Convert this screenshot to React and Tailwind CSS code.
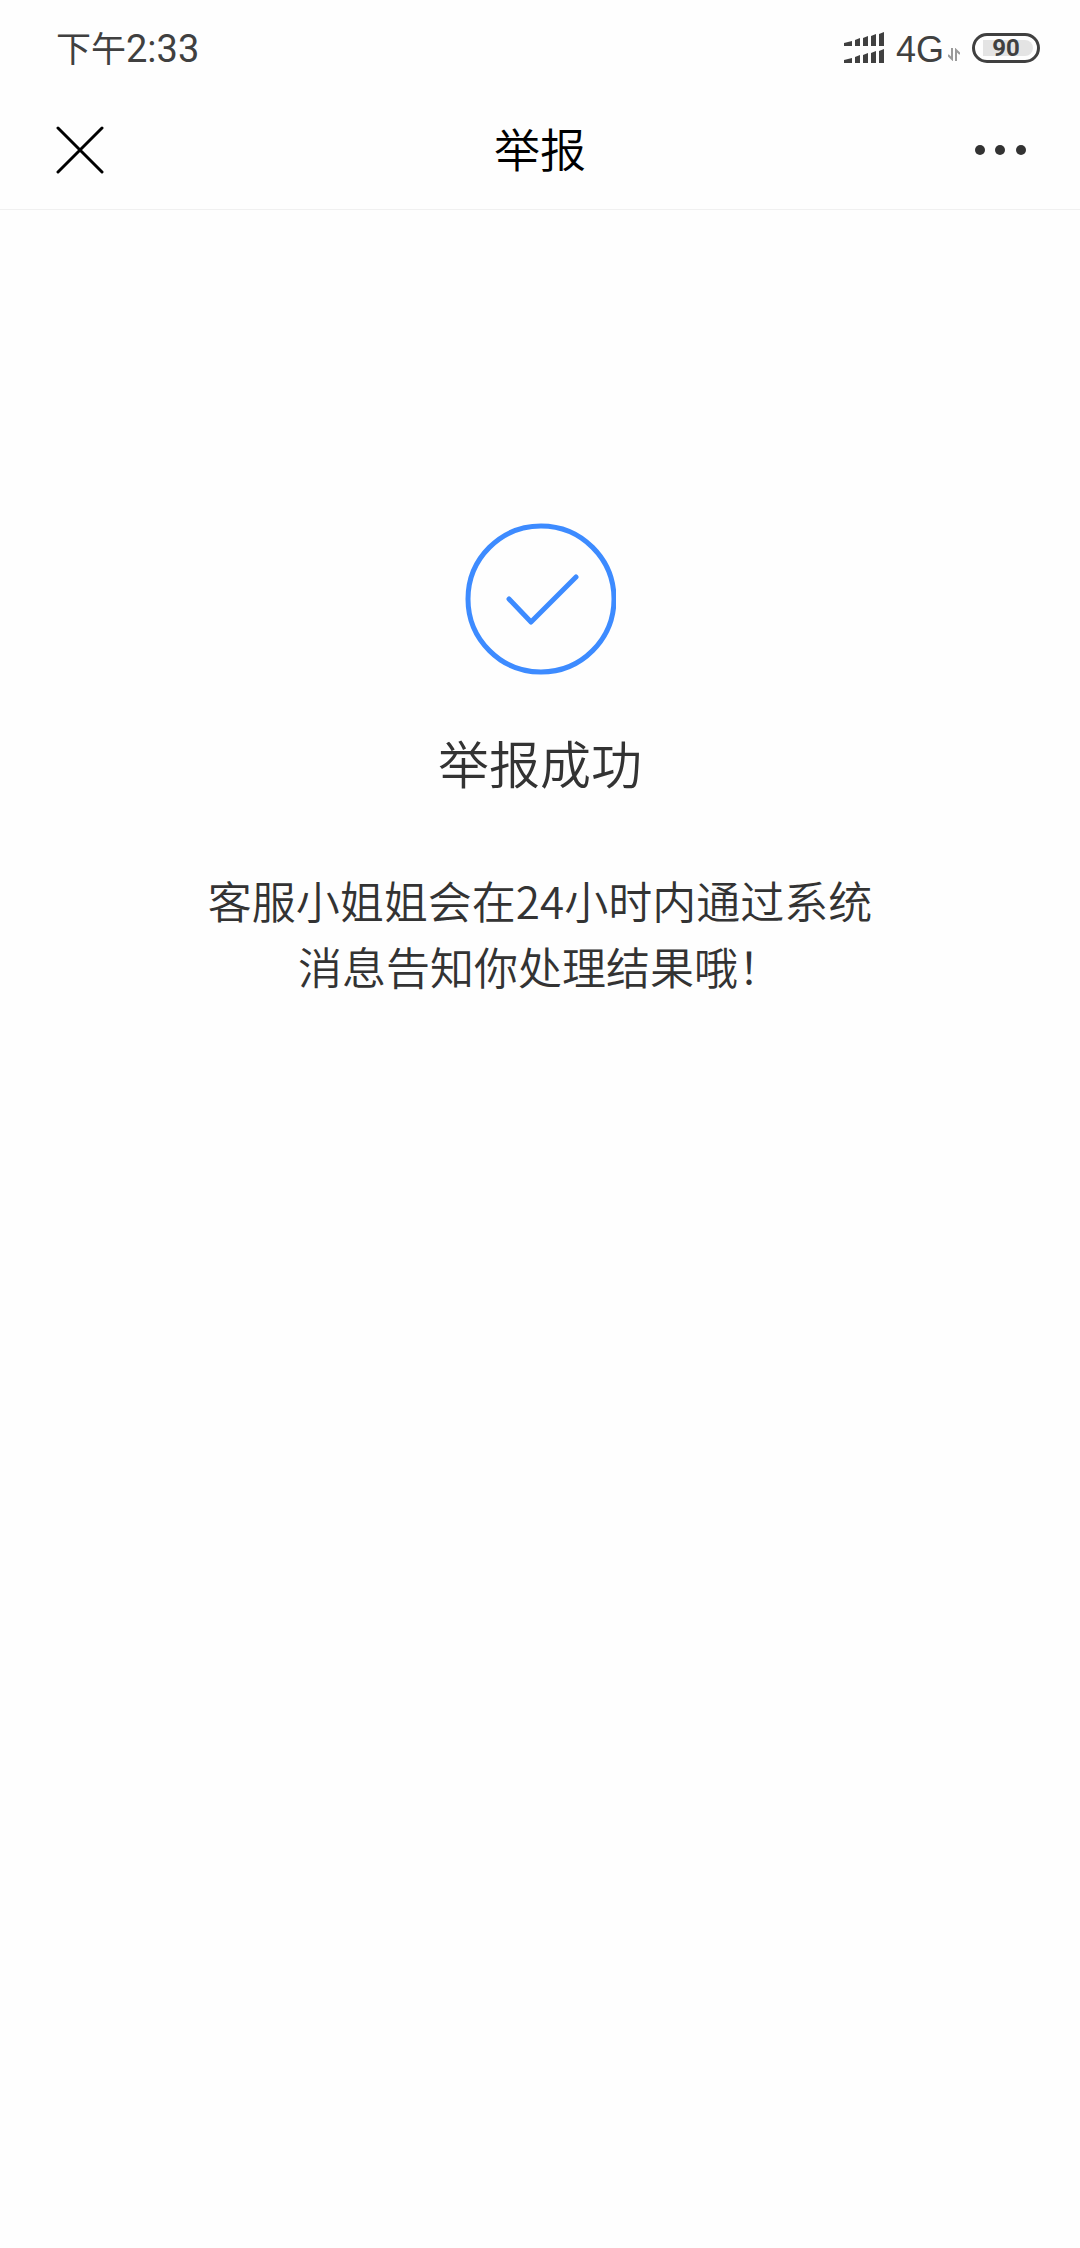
const signalBars = [
  { x: 0, h: 5 },
  { x: 11, h: 8 },
  { x: 19, h: 10 },
  { x: 27, h: 12 },
  { x: 35, h: 14 },
]

function SignalIcon() {
  return (
    <svg width="40" height="32" viewBox="0 0 40 32" fill="#404040" aria-hidden="true">
      {[14, 31].map((base) =>
        signalBars.map(({ x, h }) => {
          const w = x === 0 ? 8 : 5
          return (
            <path
              key={`${base}-${x}`}
              d={`M${x} ${base}V${base - h + 2}L${x + w} ${base - h}V${base}Z`}
            />
          )
        })
      )}
    </svg>
  )
}

function DataArrowsIcon() {
  return (
    <svg
      width="12"
      height="13"
      viewBox="0 0 12 13"
      fill="none"
      stroke="#9a9a9a"
      strokeWidth="2"
      aria-hidden="true"
    >
      <path d="M4 0V11L0 7" />
      <path d="M8 13V2L12 6" />
    </svg>
  )
}

function StatusBar() {
  return (
    <div className="flex h-24 items-center justify-between pl-14 pr-10 text-[#404040]">
      <span className="text-[35px] leading-10">
        下午<span className="font-[Roboto,sans-serif] text-[38px]">2:33</span>
      </span>
      <div className="flex items-center">
        <SignalIcon />
        <span className="ml-3 pt-1 font-['Liberation_Sans',sans-serif] text-4xl">4G</span>
        <span className="ml-1 mt-3">
          <DataArrowsIcon />
        </span>
        <div className="ml-3 flex h-[30px] w-[68px] rounded-full border-3 border-[#404040] py-1 pr-1 pl-2">
          <span className="flex flex-1 items-center justify-center rounded-r-full rounded-l-sm bg-[#e4e4e4] pr-1 font-[Roboto,sans-serif] text-2xl leading-none font-bold">
            90
          </span>
        </div>
      </div>
    </div>
  )
}

function Header() {
  return (
    <header className="flex h-[114px] items-center justify-between border-b border-[#f0f0f0] px-12 pb-1.5 text-black">
      <button type="button" aria-label="关闭" className="flex w-16 justify-start pl-2">
        <svg
          width="48"
          height="48"
          viewBox="0 0 48 48"
          fill="none"
          stroke="currentColor"
          strokeWidth="3"
          strokeLinecap="round"
        >
          <path d="M2 2L46 46M46 2L2 46" />
        </svg>
      </button>
      <h1 className="pb-1.5 text-[46px] leading-16 font-[350]">举报</h1>
      <button type="button" aria-label="更多" className="flex w-16 justify-end pr-1">
        <svg width="56" height="12" viewBox="0 0 56 12" fill="#333333">
          <circle cx="8" cy="6" r="5" />
          <circle cx="28" cy="6" r="5" />
          <circle cx="49" cy="6" r="5" />
        </svg>
      </button>
    </header>
  )
}

function SuccessIcon() {
  return (
    <svg
      width="152"
      height="152"
      viewBox="0 0 152 152"
      fill="none"
      stroke="#3d8bff"
      strokeWidth="5"
      strokeLinecap="round"
      strokeLinejoin="round"
      aria-hidden="true"
    >
      <circle cx="77" cy="76" r="73" />
      <path d="M45 76L67 99L112 54" />
    </svg>
  )
}

export default function App() {
  return (
    <div
      lang="zh-CN"
      className="min-h-screen bg-[#fefefe] font-['Noto_Sans_CJK_SC',sans-serif]"
    >
      <StatusBar />
      <Header />
      <main className="flex flex-col items-center pt-[313px] text-center text-[#333333]">
        <SuccessIcon />
        <h2 className="mt-[54px] text-[51px] leading-[66px] font-[350]">举报成功</h2>
        <p className="mt-[72px] max-w-[680px] text-[44px] leading-[66px] font-[350]">
          客服小姐姐会在24小时内通过系统消息告知你处理结果哦！
        </p>
      </main>
    </div>
  )
}
